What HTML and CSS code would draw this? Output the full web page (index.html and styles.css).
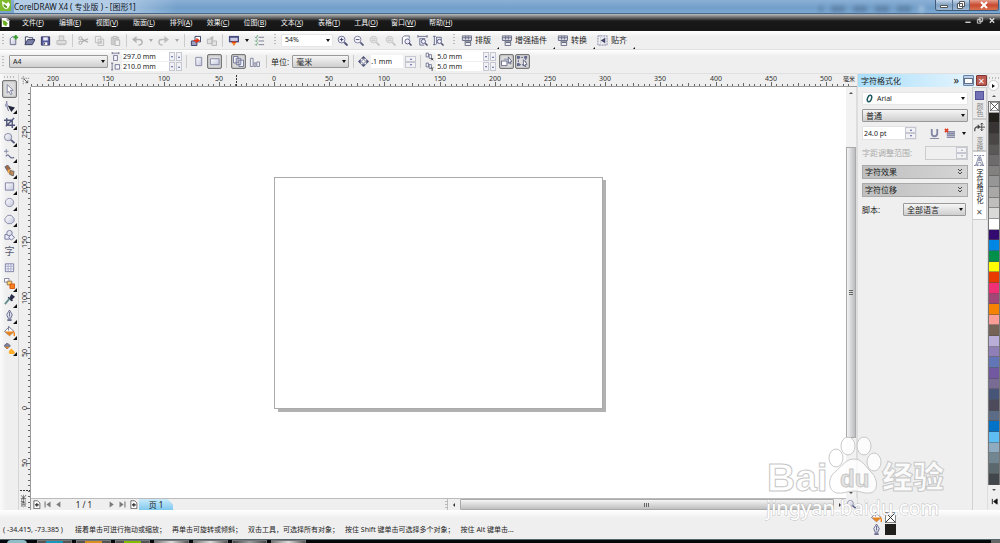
FILE: index.html
```html
<!DOCTYPE html>
<html lang="zh-CN">
<head>
<meta charset="utf-8">
<title>CorelDRAW X4</title>
<link rel="stylesheet" href="styles.css">
</head>
<body>
<svg class="sprite" aria-hidden="true">
  <defs>
    <linearGradient id="steel" x1="0" y1="0" x2="1" y2="1"><stop offset="0" stop-color="#fff"/><stop offset="1" stop-color="#c3c6dc"/></linearGradient>
  </defs>
  <symbol id="logo" viewBox="0 0 12 12"><path d="M0 0h12v12H0z" fill="#7dbb2c"/><path d="M2 1l5 3 2-2 2 3-2 4-3 1-3-3z" fill="#fff"/><path d="M4 4l4 3-1 2-3-2z" fill="#5c9a1c"/></symbol>
  <symbol id="doclogo" viewBox="0 0 12 12"><path d="M1 0h7l3 3v9H1z" fill="#fff"/><path d="M2 3l4 1 3 3-2 4-4-2z" fill="#6db024"/><path d="M8 0v3h3" fill="none" stroke="#777"/></symbol>
  <symbol id="new" viewBox="0 0 12 12"><path d="M2.500 4l2-2h4v8.500h-6z" fill="url(#steel)" stroke="#666a88"/><path d="M8.500 0v5M6 2.500h5" stroke="#35a02b" stroke-width="2"/></symbol>
  <symbol id="open" viewBox="0 0 12 12"><path d="M1.500 10V2h3l1 1h4v2" fill="#fff" stroke="#373b62"/><path d="M1 10.500L4 5h8l-3 5.500z" fill="#7b80a6" stroke="#34375c"/></symbol>
  <symbol id="save" viewBox="0 0 12 12"><path d="M1.500 2h9v9h-9z" fill="#555a9c" stroke="#34375f"/><path d="M3.500 2.500h5V6h-5z" fill="#e8eaf8"/><path d="M4 8h4v3H4z" fill="#fff"/><path d="M5 8.500v2" stroke="#333"/></symbol>
  <symbol id="print" viewBox="0 0 12 12"><path d="M3.500 6V1h5v5M1 6h10v4H1zM2 10.500h8" fill="#ddd" stroke="#bbb"/></symbol>
  <symbol id="cut" viewBox="0 0 12 12"><path d="M4 4.500L11 8M4 7.500L11 4" stroke="#aaa" stroke-width="1.300"/><g fill="none" stroke="#aaa"><circle cx="2.600" cy="3.600" r="1.700"/><circle cx="2.600" cy="8.400" r="1.700"/></g></symbol>
  <symbol id="copy" viewBox="0 0 12 12"><path d="M1.500 1.500h6v7h-6z M4.500 4.500h6v7h-6z" fill="#eee" stroke="#bbb"/><path d="M6 7h3M6 9h3" stroke="#bbb"/></symbol>
  <symbol id="paste" viewBox="0 0 12 12"><path d="M1.500 2.500h8v8h-8z" fill="#ccc" stroke="#bbb"/><path d="M3.500 1.500h4v2h-4z M5.500 5.500h5v6h-5z" fill="#eee" stroke="#b5b5b5"/></symbol>
  <symbol id="undo" viewBox="0 0 12 12"><path d="M3 5h5q3 0 3 3t-4 3" fill="none" stroke="#b4b4b4" stroke-width="1.600"/><path d="M0 5l5-4v8z" fill="#b4b4b4"/></symbol>
  <symbol id="redo" viewBox="0 0 12 12"><path d="M9 5H4Q1 5 1 8t4 3" fill="none" stroke="#bcbcbc" stroke-width="1.600"/><path d="M12 5L7 1v8z" fill="#bcbcbc"/></symbol>
  <symbol id="import" viewBox="0 0 12 12"><path d="M5.500 1.500h6v6h-6z" fill="#fff" stroke="#333a60"/><path d="M1.500 6.500h6v5h-6z" fill="#9ca1c4" stroke="#333a60"/><path d="M3 6l4-1V3l4 3-5 3V7z" fill="#e32e12"/></symbol>
  <symbol id="export" viewBox="0 0 12 12"><path d="M1.500 4.500h5v5h-5z M6.500 6.500h5v5h-5z" fill="#e2e2e2" stroke="#b5b5b5"/><path d="M4 3l4-2v5z" fill="#bbb"/></symbol>
  <symbol id="launch" viewBox="0 0 12 12"><path d="M1 1h11v7H1z" fill="#454b80"/><path d="M2.500 3h8v3.500h-8z" fill="#c9cce4"/><path d="M4 7h5v2H8l-1.500 3L5 9H4z" fill="#e54418"/><path d="M5 9.500h3" stroke="#ffb400"/></symbol>
  <symbol id="options" viewBox="0 0 12 12"><path d="M1 2l1.500 1.500L4 0M1 6l1.500 1.500L4 4M1 10l1.500 1.500L4 8" fill="none" stroke="#65a576"/><path d="M5 2.500h6M5 6.500h6M5 10.500h6" stroke="#777b91"/></symbol>
  <symbol id="zin" viewBox="0 0 12 12"><circle cx="5" cy="5" r="3.700" fill="#f7f8ff" stroke="#666b93"/><path d="M8 8l3.500 3.500" stroke="#474b6f" stroke-width="2"/><path d="M3 5h4M5 3v4" stroke="#33375f"/></symbol>
  <symbol id="zout" viewBox="0 0 12 12"><circle cx="5" cy="5" r="3.700" fill="#f7f8ff" stroke="#777c9d"/><path d="M8 8l3.500 3.500" stroke="#5b5f80" stroke-width="2"/><path d="M3 5h4" stroke="#44486e"/></symbol>
  <symbol id="zgray" viewBox="0 0 12 12"><circle cx="5" cy="5" r="3.700" fill="#e2e2e2" stroke="#c9c9c9"/><path d="M8 8l3.500 3.500" stroke="#c6c6c6" stroke-width="2"/><path d="M3 4h4M3 6h4" stroke="#cacaca"/></symbol>
  <symbol id="zpage" viewBox="0 0 12 12"><path d="M1.500 10V3l2-2H9v3" fill="#fff" stroke="#686d92"/><circle cx="7" cy="7" r="2.700" fill="#eef" stroke="#555a80"/><path d="M9 9l2.500 2.500" stroke="#45496b" stroke-width="1.700"/></symbol>
  <symbol id="zwidth" viewBox="0 0 12 12"><path d="M1 1.500h10M1 0v3M11 0v3M3 4v7h5M3 4h6" fill="none" stroke="#666b90"/><circle cx="7" cy="7" r="2.300" fill="#eef" stroke="#555a80"/><path d="M9 9l2.500 2.500" stroke="#45496b" stroke-width="1.500"/></symbol>
  <symbol id="zheight" viewBox="0 0 12 12"><path d="M1.500 1v10M0 1.500h3M0 10.500h3M4 2.500h5v3M4 2v8" fill="none" stroke="#666b90"/><circle cx="7" cy="7" r="2.300" fill="#eef" stroke="#555a80"/><path d="M9 9l2.500 2.500" stroke="#45496b" stroke-width="1.500"/></symbol>
  <symbol id="macro" viewBox="0 0 12 12"><path d="M1.500 1h10v5h-10z" fill="#dcdde8" stroke="#666982"/><path d="M2 3h9M5 1v4M8 1v4" stroke="#666982"/><path d="M4.500 6.500h6v5h-6z" fill="#eee" stroke="#666982"/><path d="M5 8h5" stroke="#666982" stroke-width="1.500"/></symbol>
  <symbol id="snap" viewBox="0 0 12 12"><path d="M1 1h10v10H1z" fill="none" stroke="#7b7fa3" stroke-dasharray="2 1"/><path d="M4 0v12M8 0v12" stroke="#aeb1c9" stroke-dasharray="1 1"/><path d="M9 3L4 6l5 3z" fill="#44486e"/></symbol>
  <symbol id="pw" viewBox="0 0 12 12"><path d="M1.500 1.500h9M1.500 0v3M10.500 0v3M3.500 4.500h5v7h-5z" fill="#f7f7ff" stroke="#53577a"/></symbol>
  <symbol id="ph" viewBox="0 0 12 12"><path d="M1.500 1.500v9M0 1.500h3M0 10.500h3M5.500 3.500h6v6h-6z" fill="#f7f7ff" stroke="#53577a"/></symbol>
  <symbol id="portrait" viewBox="0 0 12 12"><path d="M3 1.500h6.500v9H3z" fill="url(#steel)" stroke="#8588a5"/></symbol>
  <symbol id="landscape" viewBox="0 0 12 12"><path d="M1.500 3h9.500v6.500H1.500z" fill="url(#steel)" stroke="#7d81a3"/></symbol>
  <symbol id="pages" viewBox="0 0 12 12"><path d="M.5.500h5v7h-5z M3.500 2.500h5v7h-5z M6.500 4.500h5v7h-5z" fill="#f4f4fc" stroke="#6d7193"/></symbol>
  <symbol id="curpage" viewBox="0 0 12 12"><path d="M1.500 2.500h3v9h-3z M5.500 7.500h2v4h-2z M8.500 6.500h3v5h-3z" fill="#eee" stroke="#8083a0"/></symbol>
  <symbol id="nudge" viewBox="0 0 12 12"><path d="M6 0l3 3H3zM6 12L3 9h6zM0 6l3-3v6zM12 6L9 9V3z" fill="#4d5175"/><circle cx="6" cy="6" r="2" fill="#fff" stroke="#777b9a"/></symbol>
  <symbol id="dupx" viewBox="0 0 12 12"><path d="M1.500 1.500h3v5h-3z M5.500 3.500h3v5h-3z" fill="#fff" stroke="#52567b"/><path d="M8 8l3 3M11 8l-3 3" stroke="#222"/></symbol>
  <symbol id="dupy" viewBox="0 0 12 12"><path d="M1.500 1.500h3v5h-3z M5.500 3.500h3v5h-3z" fill="#fff" stroke="#52567b"/><path d="M8 7l1.500 2L11 7M9.500 9v3" stroke="#222" fill="none"/></symbol>
  <symbol id="treat" viewBox="0 0 12 12"><path d="M.5 5.500h6v5h-6z" fill="#fff" stroke="#62678c"/><path d="M3 3.500h5v4" fill="none" stroke="#8a8ea9"/><path d="M8 1l4 5-2 .3 1 2-1 .5-1-2L8 8z" fill="#fff" stroke="#474b70" stroke-width=".8"/></symbol>
  <symbol id="marquee" viewBox="0 0 12 12"><path d="M1.500 1.500h8v8h-8z" fill="none" stroke="#555a80" stroke-dasharray="2 1"/><path d="M0 0h3v3H0zM8 0h3v3H8zM0 8h3v3H0z" fill="#62678c"/><path d="M7 4l4 5-2 .3.8 2-1 .5-1-2L7 11z" fill="#fff" stroke="#474b70" stroke-width=".8"/></symbol>
  <symbol id="pick" viewBox="0 0 12 12"><path d="M3.500.5L10 7H7l1.800 3.800-1.600.8L5.500 8 3.500 9.800z" fill="#fff" stroke="#7a7e9c"/></symbol>
  <symbol id="shape" viewBox="0 0 12 12"><path d="M3 0Q2 5 5 11" fill="none" stroke="#5e6286"/><path d="M1 3h3v3H1z" fill="#9fa3c2"/><path d="M4 5l8 2-4 5z" fill="#23273c"/></symbol>
  <symbol id="crop" viewBox="0 0 12 12"><path d="M3 1v8h9M0 3.500h9V12M2 10L11 1" fill="none" stroke="#51557a" stroke-width="1.500"/></symbol>
  <symbol id="zoom" viewBox="0 0 12 12"><circle cx="4.500" cy="4.500" r="4" fill="url(#steel)" stroke="#83869f"/><path d="M7.500 7.500L11.500 11" stroke="#575b7c" stroke-width="2"/></symbol>
  <symbol id="freehand" viewBox="0 0 12 12"><path d="M2.500 0v5M0 2.500h5" stroke="#8084a6"/><path d="M2 8q2-3 4 0t5 1" fill="none" stroke="#6b6f94" stroke-width="1.300"/></symbol>
  <symbol id="smart" viewBox="0 0 12 12"><path d="M1 2l3-2 3 4-3 3z" fill="#a2663d" stroke="#666a80"/><path d="M4 5h4v4H4z" fill="#f4a64d"/><path d="M7 6l4 1-1 5-4-2z" fill="#c38b52" stroke="#666"/></symbol>
  <symbol id="rect" viewBox="0 0 12 12"><path d="M1.500 2h9v8h-9z" fill="url(#steel)" stroke="#7b7fa2"/></symbol>
  <symbol id="ellipse" viewBox="0 0 12 12"><circle cx="6" cy="6" r="4.500" fill="url(#steel)" stroke="#8589a8"/></symbol>
  <symbol id="polygon" viewBox="0 0 12 12"><path d="M4 1.500h4L11 5v3l-3 2.500H4L1 8V5z" fill="url(#steel)" stroke="#8589a8"/></symbol>
  <symbol id="shapes" viewBox="0 0 12 12"><path d="M1 5h5v5H1z" fill="#eef" stroke="#70749a"/><circle cx="6" cy="3.500" r="3" fill="url(#steel)" stroke="#70749a"/><path d="M8 5l3.500 3L8 11 5 8z" fill="#eef" stroke="#70749a"/></symbol>
  <symbol id="table" viewBox="0 0 12 12"><path d="M1.500 2h9v8.500h-9z" fill="#f5f5ff" stroke="#757a9f"/><path d="M1.500 4.700h9M1.500 7.500h9M4.500 2v8.500M7.500 2v8.500" stroke="#a5a8c4"/></symbol>
  <symbol id="blend" viewBox="0 0 12 12"><path d="M.5.500h5v4h-5z" fill="#fff" stroke="#797da0"/><path d="M3.500 3.500h5v4h-5z" fill="#ffd36a" stroke="#94734b"/><path d="M6.500 6.500h5v5h-5z" fill="#f78120" stroke="#d9540a"/></symbol>
  <symbol id="dropper" viewBox="0 0 12 12"><path d="M8 0l4 3-3 3 1 1-2 1-4-4 1-1 1 1z" fill="#2b2e4a"/><path d="M6 5L1 11" stroke="#628c8c" stroke-width="2"/></symbol>
  <symbol id="pen" viewBox="0 0 12 12"><path d="M6 0l3 5-1.500 4h-3L3 5z" fill="url(#steel)" stroke="#62668a"/><path d="M6 2v5M4 10.500h4v1H4z" stroke="#62668a" fill="#999db9"/></symbol>
  <symbol id="bucket" viewBox="0 0 12 12"><path d="M5.500 1L11 6l-5 4.500L.5 6z" fill="#fff" stroke="#70748e"/><path d="M1 6h10l-5 5z" fill="#e68422"/><path d="M10 6q2 2 1 5" fill="none" stroke="#f08010" stroke-width="1.500"/><path d="M5 0v5" stroke="#70748e"/></symbol>
  <symbol id="ifill" viewBox="0 0 12 12"><path d="M3.500 0L7 3 3.500 6.500 0 3z" fill="#808299" stroke="#65697f"/><path d="M1 4h5L3.500 6.500z" fill="#e68422"/><path d="M6 8l2-2 2 2 2 2-1 2H6l-1-2z" fill="#ffae2b"/></symbol>
  <symbol id="origin" viewBox="0 0 12 12"><path d="M3 0v12M0 3h12" stroke="#777" stroke-dasharray="2 1"/><path d="M4 4l5 5M9 6v3H6" stroke="#333" fill="none"/></symbol>
  <symbol id="addpage" viewBox="0 0 12 12"><path d="M2.500 1h5l3 3v7.500h-8z" fill="#fff" stroke="#444"/><path d="M6.500 4v5M4 6.500h5" stroke="#222" stroke-width="1.400"/></symbol>
  <symbol id="first" viewBox="0 0 12 12"><path d="M2 2h1.500v8H2zM10 2v8L4.500 6z" fill="#7b7b7b"/></symbol>
  <symbol id="prev" viewBox="0 0 12 12"><path d="M8.500 2v8L3 6z" fill="#7b7b7b"/></symbol>
  <symbol id="next" viewBox="0 0 12 12"><path d="M3.500 2v8L9 6z" fill="#7b7b7b"/></symbol>
  <symbol id="last" viewBox="0 0 12 12"><path d="M8.500 2H10v8H8.500zM2 2v8l5.500-4z" fill="#7b7b7b"/></symbol>
  <symbol id="underline" viewBox="0 0 12 12"><path d="M3 1v5q0 3 3 3t3-3V1" fill="none" stroke="#8588a5" stroke-width="2"/><path d="M1 11.500h10" stroke="#7e82a0"/></symbol>
  <symbol id="align" viewBox="0 0 12 12"><path d="M3 4h9M3 6h9M3 8h9M3 10h9" stroke="#8b8ea8" stroke-width="1.700"/><path d="M1 1l3.500 3.500M4.500 1L1 4.500" stroke="#e13a20" stroke-width="1.700"/></symbol>
  <symbol id="transform" viewBox="0 0 12 12"><path d="M1 9q-1-5 4-5M4 2l2 2-2 2" fill="none" stroke="#444" stroke-width="1.300"/><path d="M8.500 0v8M5 4.500h7M7 1.500L8.500 0 10 1.500M7 7l1.500 1.500L10 7" fill="none" stroke="#444"/></symbol>
  <symbol id="glyph" viewBox="0 0 12 12"><path d="M0 .5h12M0 11.500h12" stroke="#777ba0" stroke-dasharray="2 1"/><path d="M2 11L5 2h2l3 9H8L7.300 8H4.700L4 11zM5 6h2L6 3z" fill="#fff" stroke="#666a8c" stroke-width=".8"/></symbol>
  <symbol id="ofont" viewBox="0 0 12 12"><ellipse cx="6" cy="6" rx="2.600" ry="4.500" transform="rotate(20 6 6)" fill="none" stroke="#1f5961" stroke-width="2"/></symbol>
  <symbol id="nofill" viewBox="0 0 12 12"><path d="M.5.500h11v11H.5z" fill="#fff" stroke="#777"/><path d="M.5.500l11 11M11.500.500l-11 11" stroke="#222"/></symbol>
</svg>

<div class="app">
  <header class="titlebar">
    <svg class="ic"><use href="#logo"/></svg>
    <h1>CorelDRAW X4 ( 专业版 ) - [图形1]</h1>
    <div class="ghost" aria-hidden="true"><i></i><i></i><i></i><i></i><i></i><i></i></div>
    <div class="winbtns">
      <button aria-label="最小化"><svg viewBox="0 0 10 8"><path d="M1.500 4.500h7v2h-7z" fill="#fff" stroke="#555"/></svg></button>
      <button aria-label="还原"><svg viewBox="0 0 10 8"><path d="M3.500.500h5v5h-5z M1.500 2.500h5v5h-5z" fill="#fff" stroke="#555"/></svg></button>
      <button class="close" aria-label="关闭"><svg viewBox="0 0 10 8"><path d="M2 1l6 6M8 1L2 7" stroke="#fff" stroke-width="2"/></svg></button>
    </div>
  </header>

  <nav class="menubar">
    <svg class="ic"><use href="#doclogo"/></svg>
    <div class="menus">
      <button>文件(<u>F</u>)</button><button>编辑(<u>E</u>)</button><button>视图(<u>V</u>)</button><button>版面(<u>L</u>)</button><button>排列(<u>A</u>)</button><button>效果(<u>C</u>)</button><button>位图(<u>B</u>)</button><button>文本(<u>X</u>)</button><button>表格(<u>T</u>)</button><button>工具(<u>O</u>)</button><button>窗口(<u>W</u>)</button><button>帮助(<u>H</u>)</button>
    </div>
    <div class="docbtns">
      <button aria-label="最小化文档"><svg viewBox="0 0 8 8"><path d="M1 6h6" stroke="#ddd" stroke-width="1.500"/></svg></button>
      <button aria-label="还原文档"><svg viewBox="0 0 8 8"><path d="M3 1h4v4H3zM1 3h4v4H1z" fill="none" stroke="#ddd"/></svg></button>
      <button aria-label="关闭文档"><svg viewBox="0 0 8 8"><path d="M1.500 1.500l5 5M6.500 1.500l-5 5" stroke="#ddd" stroke-width="1.500"/></svg></button>
    </div>
  </nav>

  <div class="toolbar">
    <span class="grip"></span>
    <div class="group">
      <button aria-label="新建"><svg class="ic"><use href="#new"/></svg></button>
      <button aria-label="打开"><svg class="ic"><use href="#open"/></svg></button>
      <button aria-label="保存"><svg class="ic"><use href="#save"/></svg></button>
      <button aria-label="打印"><svg class="ic"><use href="#print"/></svg></button>
    </div>
    <span class="sep"></span>
    <div class="group">
      <button aria-label="剪切"><svg class="ic"><use href="#cut"/></svg></button>
      <button aria-label="复制"><svg class="ic"><use href="#copy"/></svg></button>
      <button aria-label="粘贴"><svg class="ic"><use href="#paste"/></svg></button>
    </div>
    <span class="sep"></span>
    <div class="group">
      <button aria-label="撤消"><svg class="ic"><use href="#undo"/></svg></button>
      <button class="drop dim" aria-label="撤消列表"></button>
      <button aria-label="重做"><svg class="ic"><use href="#redo"/></svg></button>
      <button class="drop dim" aria-label="重做列表"></button>
    </div>
    <span class="sep"></span>
    <div class="group">
      <button aria-label="导入"><svg class="ic"><use href="#import"/></svg></button>
      <button aria-label="导出"><svg class="ic"><use href="#export"/></svg></button>
    </div>
    <span class="sep"></span>
    <div class="group">
      <button aria-label="应用程序启动器"><svg class="ic"><use href="#launch"/></svg></button>
      <button class="drop" aria-label="启动器列表"></button>
      <button aria-label="选项"><svg class="ic"><use href="#options"/></svg></button>
    </div>
    <span class="grip wide"></span>
    <div class="select plain zoomlevel"><select aria-label="缩放级别"><option>54%</option></select></div>
    <div class="group zooms">
      <button aria-label="放大"><svg class="ic"><use href="#zin"/></svg></button>
      <button aria-label="缩小"><svg class="ic"><use href="#zout"/></svg></button>
      <button aria-label="缩放选定对象"><svg class="ic"><use href="#zgray"/></svg></button>
      <button aria-label="缩放全部对象"><svg class="ic"><use href="#zgray"/></svg></button>
      <button aria-label="显示页面"><svg class="ic"><use href="#zpage"/></svg></button>
      <button aria-label="按页宽显示"><svg class="ic"><use href="#zwidth"/></svg></button>
      <button aria-label="按页高显示"><svg class="ic"><use href="#zheight"/></svg></button>
    </div>
    <span class="grip wide"></span>
    <div class="plugins">
      <button><svg class="ic"><use href="#macro"/></svg>排版</button>
      <button><svg class="ic"><use href="#macro"/></svg>增强插件</button>
      <button><svg class="ic"><use href="#macro"/></svg>转换</button>
      <button><svg class="ic"><use href="#snap"/></svg>贴齐</button>
    </div>
  </div>

  <div class="toolbar props">
    <span class="grip"></span>
    <div class="select paper"><select aria-label="纸张类型"><option>A4</option></select></div>
    <div class="pair">
      <label><svg class="ic small"><use href="#pw"/></svg><input value="297.0 mm" aria-label="宽度"><span class="spin row"><button aria-label="减"></button><button aria-label="增"></button></span></label>
      <label><svg class="ic small"><use href="#ph"/></svg><input value="210.0 mm" aria-label="高度"><span class="spin row"><button aria-label="减"></button><button aria-label="增"></button></span></label>
    </div>
    <span class="sep"></span>
    <div class="group">
      <button aria-label="纵向"><svg class="ic"><use href="#portrait"/></svg></button>
      <button class="on" aria-label="横向"><svg class="ic"><use href="#landscape"/></svg></button>
    </div>
    <span class="sep"></span>
    <div class="group">
      <button class="on" aria-label="所有页面"><svg class="ic"><use href="#pages"/></svg></button>
      <button aria-label="当前页面"><svg class="ic"><use href="#curpage"/></svg></button>
    </div>
    <span class="sep"></span>
    <label class="caption" for="unit">单位:</label>
    <div class="select unit"><select id="unit"><option>毫米</option></select></div>
    <span class="sep"></span>
    <label class="nudge"><svg class="ic"><use href="#nudge"/></svg><input value=".1 mm" aria-label="微调偏移"><span class="spin"><button aria-label="增"></button><button aria-label="减"></button></span></label>
    <span class="sep"></span>
    <div class="pair dup">
      <label><svg class="ic small"><use href="#dupx"/></svg><input value="5.0 mm" aria-label="再制 X"><span class="spin row"><button aria-label="减"></button><button aria-label="增"></button></span></label>
      <label><svg class="ic small"><use href="#dupy"/></svg><input value="5.0 mm" aria-label="再制 Y"><span class="spin row"><button aria-label="减"></button><button aria-label="增"></button></span></label>
    </div>
    <div class="group">
      <button class="on" aria-label="视为填充"><svg class="ic"><use href="#treat"/></svg></button>
      <button class="on" aria-label="移动时绘制"><svg class="ic"><use href="#marquee"/></svg></button>
    </div>
  </div>

  <main>
    <aside class="toolbox">
      <span class="hgrip"></span>
      <div class="tools">
        <button class="on" aria-label="挑选"><svg class="ic"><use href="#pick"/></svg></button>
        <button class="fly" aria-label="形状"><svg class="ic"><use href="#shape"/></svg></button>
        <button class="fly" aria-label="裁剪"><svg class="ic"><use href="#crop"/></svg></button>
        <button class="fly" aria-label="缩放"><svg class="ic"><use href="#zoom"/></svg></button>
        <button class="fly" aria-label="手绘"><svg class="ic"><use href="#freehand"/></svg></button>
        <button class="fly" aria-label="智能填充"><svg class="ic"><use href="#smart"/></svg></button>
        <button class="fly" aria-label="矩形"><svg class="ic"><use href="#rect"/></svg></button>
        <button class="fly" aria-label="椭圆形"><svg class="ic"><use href="#ellipse"/></svg></button>
        <button class="fly" aria-label="多边形"><svg class="ic"><use href="#polygon"/></svg></button>
        <button class="fly" aria-label="基本形状"><svg class="ic"><use href="#shapes"/></svg></button>
        <button class="texttool">字</button>
        <button aria-label="表格"><svg class="ic"><use href="#table"/></svg></button>
        <button class="fly" aria-label="调和"><svg class="ic"><use href="#blend"/></svg></button>
        <button class="fly" aria-label="滴管"><svg class="ic"><use href="#dropper"/></svg></button>
        <button class="fly" aria-label="轮廓"><svg class="ic"><use href="#pen"/></svg></button>
        <button class="fly" aria-label="填充"><svg class="ic"><use href="#bucket"/></svg></button>
        <button class="fly" aria-label="交互式填充"><svg class="ic"><use href="#ifill"/></svg></button>
      </div>
    </aside>

    <section class="workspace">
      <div class="corner"><svg class="ic small"><use href="#origin"/></svg></div>
      <div class="hruler"><svg id="hruler"></svg><span>毫米</span></div>
      <div class="vruler"><svg id="vruler"></svg><span>毫米</span></div>
      <div class="canvas"><div class="page"></div></div>
      <div class="vscroll">
        <button class="up" aria-label="向上滚动"></button>
        <div class="track"><div class="thumb"></div></div>
        <button class="down" aria-label="向下滚动"></button>
      </div>
      <div class="pagebar">
        <div class="pages">
          <button aria-label="在前添加页"><svg class="ic small"><use href="#addpage"/></svg></button>
          <button aria-label="首页"><svg class="ic small"><use href="#first"/></svg></button>
          <button aria-label="上一页"><svg class="ic small"><use href="#prev"/></svg></button>
          <span class="count">1 / 1</span>
          <button aria-label="下一页"><svg class="ic small"><use href="#next"/></svg></button>
          <button aria-label="末页"><svg class="ic small"><use href="#last"/></svg></button>
          <button aria-label="在后添加页"><svg class="ic small"><use href="#addpage"/></svg></button>
          <button class="tab">页 1</button>
          <span class="grip end"></span>
        </div>
        <div class="hscroll">
          <button class="left" aria-label="向左滚动"></button>
          <div class="thumb"></div>
          <button class="right" aria-label="向右滚动"></button>
        </div>
      </div>
      <button class="navigator" aria-label="导航器"><svg class="ic small"><use href="#zoom"/></svg></button>
    </section>

    <aside class="docker">
      <header>
        <h2>字符格式化</h2>
        <span class="chev">»</span>
        <button class="min" aria-label="最小化泊坞窗"></button>
        <button class="x" aria-label="关闭泊坞窗">✕</button>
      </header>
      <div class="dockbody">
        <form class="panel">
          <div class="select plain fontname"><svg class="ic small"><use href="#ofont"/></svg><select aria-label="字体"><option>Arial</option></select></div>
          <div class="select"><select aria-label="字体样式"><option>普通</option></select></div>
          <div class="line size">
            <div class="stepper"><input value="24.0 pt" aria-label="字号"><span class="spin"><button type="button" aria-label="增"></button><button type="button" aria-label="减"></button></span></div>
            <button type="button" aria-label="下划线"><svg class="ic"><use href="#underline"/></svg></button>
            <button type="button" aria-label="对齐"><svg class="ic"><use href="#align"/></svg></button>
            <button type="button" class="drop" aria-label="对齐列表"></button>
          </div>
          <div class="line kern">
            <label for="kern">字距调整范围:</label>
            <div class="stepper off"><input id="kern" disabled><span class="spin"><button type="button" aria-label="增" disabled></button><button type="button" aria-label="减" disabled></button></span></div>
          </div>
          <button type="button" class="fold">字符效果<svg viewBox="0 0 6 8"><path d="M1 1l2 2 2-2M1 4l2 2 2-2" fill="none" stroke="#444"/></svg></button>
          <button type="button" class="fold">字符位移<svg viewBox="0 0 6 8"><path d="M1 1l2 2 2-2M1 4l2 2 2-2" fill="none" stroke="#444"/></svg></button>
          <div class="line script">
            <label for="script">脚本:</label>
            <div class="select"><select id="script"><option>全部语言</option></select></div>
          </div>
        </form>
        <div class="tabs">
          <button class="color"><i></i><span>颜色</span></button>
          <button><svg class="ic"><use href="#transform"/></svg><span>变换</span></button>
          <button class="active"><svg class="ic"><use href="#glyph"/></svg><span>字符格式化</span><b>✕</b></button>
        </div>
      </div>
    </aside>

    <aside class="palette">
      <span class="hgrip"></span>
      <button class="play" aria-label="调色板菜单"></button>
      <button class="up" aria-label="向上滚动"></button>
      <div class="swatches" id="swatches"></div>
      <button class="down" aria-label="向下滚动"></button>
      <button class="expand" aria-label="展开调色板"><svg viewBox="0 0 8 8"><path d="M1.500 1v6M7 1v6L3 4z" fill="#111" stroke="#111"/></svg></button>
    </aside>
  </main>

  <footer class="status">
    <span class="coords">( -34.415, -73.385 )</span>
    <p><span>接着单击可进行拖动或缩放；</span><span>再单击可旋转或倾斜；</span><span>双击工具，可选择所有对象；</span><span>按住 Shift 键单击可选择多个对象；</span><span>按住 Alt 键单击...</span></p>
    <div class="inks">
      <svg class="ic"><use href="#bucket"/></svg><svg class="ic"><use href="#nofill"/></svg>
      <svg class="ic"><use href="#pen"/></svg><i></i>
    </div>
  </footer>
  <div class="taskbar" aria-hidden="true"><b class="orb"></b><i class="blue"></i><i class="gold"></i><i class="green"></i><i class="lit"></i><i class="lit"></i><i></i><i class="lit"></i><span></span></div>

  <svg class="watermark" viewBox="0 0 184 90" role="img" aria-label="Baidu 经验">
    <g class="mark">
      <text class="latin" x="2" y="57">Bai</text>
      <text class="cjk" x="117" y="54">经验</text>
      <ellipse cx="71" cy="24" rx="7" ry="9"/>
      <ellipse cx="83" cy="12" rx="7" ry="9"/>
      <ellipse cx="99" cy="12" rx="7" ry="9"/>
      <ellipse cx="109" cy="28" rx="7" ry="9"/>
      <path d="M89 25c8 0 11 7 17 13 6 5 9 19-1 21-6 1-9-2-16-2s-10 3-17 2c-10-2-9-16-2-21 7-6 11-13 19-13z"/>
      <text class="du" x="75" y="53">du</text>
      <text class="url" x="1" y="81">jingyan.baidu.com</text>
    </g>
  </svg>
</div>
<script src="app.js"></script>
</body>
</html>
```
FILE: styles.css
```css
* { box-sizing: border-box; }
body { margin: 0; font: 7px/10px "Noto Sans", "Noto Sans CJK SC", sans-serif; color: #1c1c1c; background: #efefef; }
button, input, select { font: inherit; color: inherit; margin: 0; padding: 0; border: 0; background: none; min-width: 0; }
button { display: flex; align-items: center; justify-content: center; flex: none; white-space: nowrap; }
h1, h2, p { margin: 0; font-weight: 400; white-space: nowrap; }
.sprite { position: absolute; width: 0; height: 0; }
.ic { width: 11px; height: 11px; flex: none; display: block; }
.ic.small { width: 9px; height: 9px; }
.app { position: relative; display: flex; flex-direction: column; height: 100vh; overflow: hidden; }

/* title and menu */
.titlebar { display: flex; align-items: flex-start; gap: 3px; height: 14px; flex: none; background: linear-gradient(#8bb0d6, #729fc9 60%, #7ba8d2); border-bottom: 1px solid #48688c; }
.titlebar h1 { font-size: 8px; line-height: 13px; color: #10151c; padding-right: 40px; background: linear-gradient(90deg, #b4cde6 60%, transparent); }
.ghost { display: flex; gap: 8px; margin: 6px 8px 0 auto; filter: blur(2px); }
.ghost i { width: 14px; height: 6px; background: #5f83a8; }
.ghost i:first-child { width: 4px; }
.ghost i:last-child { width: 5px; background: #a9c5e0; }
.winbtns { display: flex; border: 1px solid #405a78; border-top: 0; border-radius: 0 0 3px 3px; height: 11px; overflow: hidden; margin-right: 1px; }
.winbtns button { width: 17px; background: linear-gradient(#c5d7ea, #82a1c2 50%, #9fbad5); border-right: 1px solid #53718f; }
.winbtns svg { width: 10px; height: 8px; }
.winbtns .close { width: 28px; border: 0; background: linear-gradient(#e5a08e, #c84a31 50%, #d8714e); }
.menubar { display: flex; align-items: center; gap: 14px; height: 17px; flex: none; padding-left: 1px; color: #f1f1f1; background: linear-gradient(#bdbdbd 0, #777 3px, #191919 7px, #161616); }
.menubar > .ic { width: 9px; margin-right: -3px; }
.menus { display: flex; gap: 13px; }
.menus button { min-width: 24px; height: 14px; }
.docbtns { display: flex; gap: 4px; margin: 0 4px 4px auto; }
.docbtns svg { width: 8px; height: 7px; }

/* toolbars */
.toolbar { display: flex; align-items: center; gap: 2px; height: 19px; flex: none; padding-left: 2px; background: linear-gradient(#fff, #efefef 6px); border-bottom: 1px solid #e0e0e0; }
.grip { width: 2px; height: 12px; flex: none; background: repeating-linear-gradient(#bbb 0 1px, transparent 1px 3px); }
.grip.wide { margin: 0 3px 0 5px; }
.sep { width: 1px; height: 13px; flex: none; background: #ccc; margin: 0 1px; }
.group { display: flex; align-items: center; gap: 1px; }
.group button { width: 15px; height: 15px; }
.group .drop, .drop { width: 9px; height: 10px; }
.drop::after, .select::after { content: ""; border: 3px solid transparent; border-top-color: #111; border-bottom: 0; border-left-width: 2px; border-right-width: 2px; }
.drop.dim::after { border-top-color: #aaa; }
.on { border: 1px solid #777; border-radius: 2px; background: #dcdcdc; box-shadow: inset 0 0 2px #888; }
.select { position: relative; display: flex; align-items: center; height: 13px; border: 1px solid #999; border-radius: 1px; background: linear-gradient(#f5f5f5, #cfcfcf); }
.select select { appearance: none; flex: 1; height: 100%; padding-left: 3px; outline: 0; }
.select::after { position: absolute; right: 2px; pointer-events: none; }
.select.plain { background: #fff; border-color: #e6e6e6; }
.zoomlevel { width: 52px; }
.plugins { display: flex; gap: 5px; font-size: 8px; margin-left: 1px; }
.plugins button { position: relative; gap: 3px; height: 14px; padding-right: 5px; }
.plugins button::after, .fly::after { content: ""; position: absolute; right: 0; bottom: 0; border: 2px solid #111; border-top-color: transparent; border-left-color: transparent; width: 0; }
.plugins button::after { right: -3px; bottom: -2px; border-width: 1px; }
.props { height: 24px; gap: 3px; }
.paper { width: 99px; margin-left: 2px; }
.pair { display: flex; flex-direction: column; gap: 1px; margin-right: 2px; }
.pair label, .nudge { display: flex; align-items: center; gap: 2px; }
.pair input { width: 47px; height: 9px; padding-left: 1px; background: #fff; }
.spin { display: flex; flex-direction: column; flex: none; width: 11px; }
.spin button { width: 100%; height: 6px; border: 1px solid #c5c8d3; background: #f2f2f4; }
.spin button::after { content: ""; border: 1px solid transparent; border-bottom: 2px solid #5060a0; border-top: 0; }
.spin button:last-child::after { transform: rotate(180deg); }
.spin.row { flex-direction: row; gap: 1px; margin-left: -2px; }
.spin.row button { width: 6px; height: 9px; }
.spin.row button:first-child::after { transform: rotate(180deg); }
.spin.row button:last-child::after { transform: none; }
.caption { font-size: 8px; }
.unit { width: 57px; font-size: 8px; }
.nudge input { width: 32px; height: 13px; background: #fff; }

/* main area */
main { display: flex; flex: 1; min-height: 0; }
.hgrip { display: block; width: 11px; height: 2px; margin: 1px auto; flex: none; background: repeating-linear-gradient(90deg, #bbb 0 1px, transparent 1px 3px); }
.toolbox { width: 19px; flex: none; border-right: 1px solid #d5d5d5; background: linear-gradient(90deg, #fafafa, #efefef 6px); padding: 1px 0; }
.tools { display: flex; flex-direction: column; height: 278px; padding: 1px 2px; }
.tools button { position: relative; width: 15px; flex: 1; }
.tools .texttool { font: 10px/12px "Noto Sans CJK SC", sans-serif; color: #555a72; }
.workspace { flex: 1; min-width: 0; display: grid; grid-template: 13px minmax(0, 1fr) 12px / 12px minmax(0, 1fr) 11px; }
.corner { display: flex; align-items: center; justify-content: center; }
.hruler { grid-column: 2 / 4; position: relative; border-bottom: 1px solid #999; }
.hruler svg, .vruler svg { display: block; width: 100%; height: 100%; overflow: hidden; }
.hruler span { position: absolute; right: 2px; top: 0; font-size: 6px; }
.vruler { grid-row: 2 / 4; position: relative; border-right: 1px solid #999; }
.vruler span { position: absolute; left: 0; bottom: 3px; font-size: 6px; writing-mode: vertical-rl; transform: rotate(180deg); }
.tick { stroke: #666; shape-rendering: crispEdges; }
.marker { stroke: #333; stroke-dasharray: 2 1; shape-rendering: crispEdges; }
.num { font-size: 7px; fill: #333; text-anchor: middle; }
.canvas { position: relative; background: #fff; overflow: hidden; }
.page { position: absolute; left: 243px; top: 90px; width: 329px; height: 232px; border: 1px solid #aaa; background: #fff; box-shadow: 3px 3px 0 #b1b1b1; clip-path: polygon(0 0, 100% 0, 100% 3px, 400px 3px, 400px 300px, 4px 300px, 4px 100%, 0 100%); }
.vscroll { display: flex; flex-direction: column; background: #f2f2f2; border-right: 1px solid #ddd; }
.vscroll button { height: 11px; width: 100%; }
.track { flex: 1; display: flex; flex-direction: column; padding: 49px 0 49px; }
.thumb { flex: 1; display: flex; align-items: center; justify-content: center; border: 1px solid #aaa; background: linear-gradient(90deg, #f3f3f3, #bbbcc0); }
.thumb::after { content: ""; width: 4px; height: 5px; background: repeating-linear-gradient(#666 0 1px, transparent 1px 2px); }
.up::after, .down::after, .left::after, .right::after { content: ""; border: 2px solid transparent; }
.up::after { border-bottom-color: #555; border-top: 0; }
.down::after { border-top-color: #555; border-bottom: 0; }
.left::after { border-right-color: #333; border-left: 0; }
.right::after { border-left-color: #333; border-right: 0; }
.pagebar { grid-column: 2; display: flex; border-top: 1px solid #bbb; }
.pages { display: flex; align-items: center; width: 51%; }
.pages button { width: 11px; height: 11px; }
.count { width: 36px; text-align: center; font-size: 8px; margin: 0 4px 0 2px; }
.pages .tab { width: 34px; font-size: 8px; background: linear-gradient(#c9eafa, #80c8ee); clip-path: polygon(0 0, 84% 0, 100% 50%, 100% 100%, 0 100%); }
.grip.end { margin-left: auto; height: 8px; }
.hscroll { flex: 1; display: flex; border-left: 1px solid #bbb; }
.hscroll button { width: 12px; }
.hscroll .thumb { background: linear-gradient(#f5f5f5, #bfbfbf); border-radius: 1px; }
.hscroll .thumb::after { width: 5px; height: 4px; background: repeating-linear-gradient(90deg, #666 0 1px, transparent 1px 2px); }

/* docker */
.docker { width: 130px; flex: none; display: flex; flex-direction: column; border-left: 1px solid #ddd; }
.docker header { display: flex; align-items: center; gap: 2px; height: 13px; padding-left: 3px; background: linear-gradient(90deg, #a9defb, #e6f5fd 90%); }
.docker h2 { font-size: 8px; line-height: 12px; flex: 1; }
.chev { font-size: 11px; margin: -2px 2px 0 0; }
.docker header button { width: 11px; height: 11px; border: 1px solid #6e83a3; border-radius: 1px; background: #b9cee9; }
.docker header .min::after { content: ""; width: 7px; height: 4px; border: 1px solid #5f6f89; background: #fff; }
.docker header .x { color: #fff; background: #bc5b53; border-color: #803630; font-size: 8px; }
.dockbody { flex: 1; display: flex; }
.panel { flex: 1; min-width: 0; padding: 5px 4px 0; display: flex; flex-direction: column; gap: 4px; border-right: 1px solid #d2d2d2; }
.fontname .ic { margin-left: 2px; }
.panel .select { font-size: 8px; }
.panel .fontname { font-size: 7px; }
.line { display: flex; align-items: center; gap: 5px; }
.line > label { font-size: 8px; white-space: nowrap; }
.stepper { display: flex; align-items: center; background: #fff; border: 1px solid #e3e3e3; height: 14px; }
.stepper input { width: 42px; height: 12px; padding-left: 1px; }
.size { justify-content: space-between; gap: 2px; }
.size .stepper { margin-right: 8px; }
.kern { justify-content: space-between; color: #aaa; height: 17px; }
.stepper.off { background: #efefef; border-color: #ccc; }
.off input { width: 30px; }
.off .spin button::after { border-bottom-color: #aaa; }
.fold { justify-content: space-between; height: 14px; padding: 0 4px 0 2px; border: 1px solid #aaa; font-size: 8px; background: linear-gradient(90deg, #bfbfbf, #d5d5d5); }
.fold svg { width: 6px; height: 8px; }
.script { justify-content: space-between; margin-top: 2px; }
.script .select { width: 63px; margin-right: 2px; }
.tabs { width: 14px; flex: none; }
.tabs button { flex-direction: column; gap: 3px; justify-content: flex-start; width: 14px; padding: 3px 0; height: 32px; color: #888; border: 1px solid #ccc; border-left: 0; background: #ebebeb; font-size: 7px; line-height: 9px; }
.tabs .color i { width: 9px; height: 9px; background: #7371b5; border: 1px solid #555398; flex: none; }
.tabs span { writing-mode: vertical-rl; }
.tabs .active { height: auto; background: #fff; color: #222; }
.tabs b { font-size: 8px; font-weight: 400; color: #555; }

/* palette */
.palette { width: 13px; flex: none; display: flex; flex-direction: column; border-left: 1px solid #ddd; padding: 2px 0; }
.palette .play { height: 11px; width: 11px; border: 1px solid #ccc; border-radius: 6px; background: #fff; }
.play::after { content: ""; border: 2px solid transparent; border-left: 3px solid #111; border-right: 0; }
.palette .up, .palette .down { height: 10px; }
.swatches { flex: 1; display: flex; flex-direction: column; min-height: 0; border: 1px solid #777; border-bottom: 0; }
.swatches button { flex: 1; min-height: 0; border-bottom: 1px solid rgba(80, 80, 80, .5); }
.swatches svg { width: 9px; height: 9px; }
.expand { height: 13px; }
.expand svg { width: 7px; height: 7px; }

/* status and taskbar */
.status { display: flex; align-items: center; height: 29px; flex: none; padding: 10px 104px 0 3px; background: linear-gradient(#fff, #efefef 8px); }
.coords { width: 72px; flex: none; white-space: nowrap; }
.status p { display: flex; gap: 6px; flex: 1; }
.inks { display: grid; grid-template-columns: 11px 11px; gap: 1px 3px; margin-top: -12px; }
.inks i { background: #211f1b; }
.taskbar { display: flex; gap: 4px; align-items: flex-start; height: 4px; flex: none; background: #05080b; border-top: 1px solid #54656b; overflow: hidden; }
.taskbar i { width: 35px; height: 4px; background: linear-gradient(90deg, #45484b, #9a9fa3, #45484b); border: 1px solid #777; }
.orb { width: 20px; height: 8px; margin: 0 6px 0 7px; border-radius: 10px; background: #91bdc9; }
.taskbar .blue { background: linear-gradient(90deg, #555 25%, #1598bd 25% 75%, #555 75%); }
.taskbar .gold { background: linear-gradient(90deg, #555 25%, #d89120 25% 75%, #555 75%); }
.taskbar .green { background: linear-gradient(90deg, #555 25%, #83bd00 25% 75%, #555 75%); }
.taskbar .lit { background: linear-gradient(90deg, #777, #ddd 50%, #555); }
.taskbar span { width: 9px; height: 4px; margin-left: auto; background: #666; }

/* watermark */
.watermark { position: absolute; right: 51px; bottom: 19px; width: 184px; height: 90px; pointer-events: none; }
.mark { fill: #fff; fill-opacity: .8; stroke: #c8c8c8; stroke-width: 1; }
.mark .latin { font: bold 39px "Liberation Sans", sans-serif; }
.mark .cjk { font: 900 31px "Noto Sans CJK SC", sans-serif; }
.mark .du { font: bold 24px "Liberation Sans", sans-serif; fill: #ddd; }
.mark .url { font: 20px/20px "Noto Sans", sans-serif; stroke: #c0c0c0; stroke-width: 1; paint-order: stroke; fill-opacity: 1; }
```
FILE: app.js
```js
const NS = "http://www.w3.org/2000/svg";
const SCALE = 1.104;

function add(parent, name, attrs, text) {
  const el = document.createElementNS(NS, name);
  for (const key in attrs) el.setAttribute(key, attrs[key]);
  if (text !== undefined) el.textContent = text;
  parent.appendChild(el);
}

const h = document.getElementById("hruler");
for (let v = -220; v <= 520; v += 5) {
  const x = Math.round(243 + v * SCALE);
  const major = v % 50 === 0;
  const top = major ? 8 : v % 25 === 0 ? 9 : 10;
  add(h, "line", { class: "tick", x1: x, x2: x, y1: top, y2: 12 });
  if (major) add(h, "text", { class: "num", x: x, y: 7 }, Math.abs(v));
}
add(h, "line", { class: "marker", x1: 205, x2: 205, y1: 1, y2: 12 });

const r = document.getElementById("vruler");
for (let v = -90; v <= 285; v += 5) {
  const y = Math.round(321 - v * SCALE);
  const major = v % 50 === 0;
  add(r, "line", { class: "tick", x1: major ? 7 : 9, x2: 11, y1: y, y2: y });
  if (major) add(r, "text", { class: "num", x: 0, y: 0, transform: `translate(8 ${y}) rotate(-90)` }, Math.abs(v));
}
add(r, "line", { class: "marker", x1: 1, x2: 11, y1: 403, y2: 403 });

const colors = ["none", "#231f1a", "#373433", "#4a4646", "#5b5858", "#6d6b6b", "#828180", "#979696", "#a9a8a6", "#bfbebc", "#d9d9d8", "#ffffff",
  "#330b70", "#0087e3", "#00904a", "#ffff00", "#e93b00", "#ef2f76", "#a04778", "#f58200", "#fb9d97", "#756357", "#b9aed8", "#8f7fb7",
  "#6275b7", "#7258a0", "#796c94", "#475578", "#4d4a5c", "#5d6c86", "#0073c8", "#5ebef3", "#8eabc0", "#718690", "#5b686e", "#41474b"];
const box = document.getElementById("swatches");
for (const color of colors) {
  const b = document.createElement("button");
  b.setAttribute("aria-label", color);
  if (color === "none") b.innerHTML = '<svg><use href="#nofill"/></svg>';
  else b.style.background = color;
  box.appendChild(b);
}
```
